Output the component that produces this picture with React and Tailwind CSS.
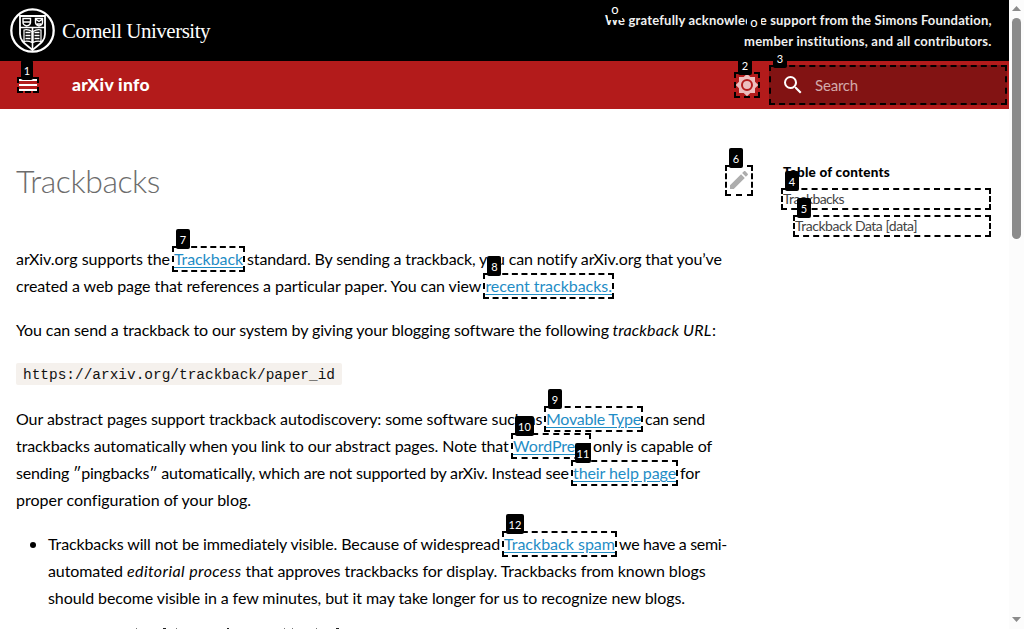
import React, { useLayoutEffect, useRef, useState } from "react";

// Text run whose tracking is computed so that it fills `w` pixels.
function T({ w, children, className = "" }) {
  const ref = useRef(null);
  const [ls, setLs] = useState(0);
  useLayoutEffect(() => {
    const el = ref.current;
    const range = document.createRange();
    range.selectNodeContents(el);
    const natural = range.getBoundingClientRect().width;
    setLs((prev) => prev + (w - natural) / String(children).length);
  }, [w, children]);
  return (
    <span className={`block whitespace-pre ${className}`} style={{ width: w }}>
      <span ref={ref} style={{ letterSpacing: ls }}>{children}</span>
    </span>
  );
}

function Hint({ n, box = "inset-0", text = "pt-[1px]", wide = "w-[14px]" }) {
  return (
    <span className={`absolute z-10 border-2 border-dashed border-black ${box}`}>
      <span className={`absolute left-[2px] top-[-19px] flex h-5 items-center justify-center rounded-[2px] bg-black text-[11px] leading-none font-normal text-white ${wide} ${text}`}>{n}</span>
    </span>
  );
}

// Segments are [text, start x, end x, style, hint number, hint width].
function Line({ start, segs }) {
  let x = start;
  return (
    <div className="flex h-[27.2px] items-start">
      {segs.map(([t, a, b, kind, n, wide], i) => {
        const ml = a - x;
        x = b;
        return (
          <span key={i} className="relative block h-[27.2px] shrink-0 leading-[26px]" style={{ marginLeft: ml }}>
            <T w={b - a} className={kind === "a" ? "text-[#1f8dc6] underline underline-offset-2" : kind === "i" ? "italic" : ""}>{t}</T>
            {n && <Hint n={n} wide={wide} box="-left-[2px] -right-[2px] top-0 h-[26px]" />}
          </span>
        );
      })}
    </div>
  );
}

function Shield() {
  return (
    <svg className="size-[45px] shrink-0" viewBox="0 0 45 45" fill="none" stroke="#fff">
      <circle cx="22.5" cy="22.5" r="21.2" strokeWidth="2.3" />
      <path d="M10 8h25v18c0 8-7 11-12.5 16C17 37 10 34 10 26Z" strokeWidth="1.8" />
      <path d="M10 19.5h25M22.5 19.5V41" strokeWidth="1.6" />
      <path d="M13 10.5h7.500v4c0 2.500-2 3-3.700 3.500-2-.5-3.800-1-3.800-3.500ZM25.500 10.500h7v4c0 2.500-2 3-3.500 3.500-1.500-.5-3.500-1-3.500-3.500ZM13 14h7M26 11.500l3 2 3-2M27 16h4" strokeWidth="1.4" />
      <path d="M14 22q4-1 8 1.500v11q-4-2-8-1ZM31 22q-4-1-8 1.500v11q4-2 8-1Z" strokeWidth="1.2" />
      <path d="M15.500 24.500h5M15.500 27.500h5M15.500 30.500h5M24.500 24.500h5M24.500 27.500h5M24.500 30.500h5" strokeWidth="1.5" />
    </svg>
  );
}

export default function App() {
  return (
    <div className="flex h-[629px] w-[1024px] overflow-hidden bg-white font-['Lato',sans-serif] text-black">
      <div className="flex h-full w-[1009px] flex-col">
        <header className="flex h-[61px] shrink-0 items-center justify-between bg-black pr-[17px] pl-[10px] text-white">
          <div className="flex items-center gap-[7px]">
            <Shield />
            <T w={148} className="pt-[2px] font-['Liberation_Serif',serif] text-[21px] leading-none">Cornell University</T>
          </div>
          <div className="relative flex flex-col items-end text-[13px] leading-[21px] font-bold text-[#f0f0f0]">
            <T w={387}>We gratefully acknowledge support from the Simons Foundation,</T>
            <T w={248}>member institutions, and all contributors.</T>
            <span className="absolute top-[-10px] left-[3px] flex h-5 w-[14px] items-center justify-center bg-black text-[13px] leading-none font-normal text-white">o</span>
            <span className="absolute top-[2px] left-[142px] flex h-5 w-[14px] items-center justify-center bg-black pt-[2px] text-[13px] leading-none font-normal text-white">o</span>
          </div>
        </header>
        <nav className="flex h-12 shrink-0 items-center bg-[#b31b1b] pl-[17px] text-white">
          <div className="relative flex h-4 w-[22px] items-center justify-center">
            <svg className="h-3 w-[18px]" viewBox="0 0 18 12"><path d="M0 0h18v2H0zM0 5h18v2H0zM0 10h18v2H0z" fill="#fff" /></svg>
            <Hint n="1" wide="w-[12px]" />
          </div>
          <T w={78} className="ml-[33px] text-[17.5px] leading-none font-black">arXiv info</T>
          <div className="relative ml-[584px] flex size-[26px] items-center justify-center">
            <svg className="size-6" viewBox="0 0 24 24">
              <path d="M20 8.690V4h-4.690L12 .69 8.690 4H4v4.690L.69 12 4 15.310V20h4.690L12 23.310 15.310 20H20v-4.690L23.310 12z" fill="#ecbfbf" />
              <circle cx="12" cy="12" r="5" fill="none" stroke="#b31b1b" strokeWidth="2" />
            </svg>
            <Hint n="2" />
          </div>
          <div className="relative ml-[9px] flex h-10 w-[238px] items-center bg-[#821313] pl-[12px]">
            <svg className="size-6" viewBox="0 0 24 24" fill="#fff"><path d="M9.500 3A6.500 6.500 0 0 1 16 9.500c0 1.610-.59 3.090-1.560 4.230l.27.270h.790l5 5-1.500 1.500-5-5v-.79l-.27-.27A6.520 6.520 0 0 1 9.500 16 6.500 6.500 0 0 1 3 9.500 6.500 6.500 0 0 1 9.500 3m0 2C7 5 5 7 5 9.500S7 14 9.500 14 14 12 14 9.500 12 5 9.500 5" /></svg>
            <T w={43} className="ml-[10px] text-[15px] leading-none text-[#d3aaaa]">Search</T>
            <Hint n="3" />
          </div>
        </nav>
        <div className="flex min-h-0 flex-1 items-start">
          <main className="flex w-[765px] flex-col pl-4 text-[16px] leading-[27.2px]">
            <div className="mt-[54px] flex h-[34px] items-center">
              <T w={144} className="pt-[2px] text-[32px] leading-none font-light text-[#6c6c6c]">Trackbacks</T>
              <div className="relative ml-[565px] flex h-[31px] w-[28px] shrink-0 items-center justify-center">
                <svg className="size-6" viewBox="0 0 24 24" fill="#adadad"><path d="M20.710 7.040c.39-.39.39-1.040 0-1.410l-2.340-2.340c-.37-.39-1.020-.39-1.410 0l-1.840 1.830 3.750 3.750M3 17.250V21h3.750L17.810 9.930l-3.750-3.750z" /></svg>
                <Hint n="6" />
              </div>
            </div>
            <div className="mt-[49px]">
              <Line start={16} segs={[["arXiv.org supports the", 16, 170], ["Trackback", 174, 243, "a", "7"], ["standard. By sending a trackback, you can notify arXiv.org that you’ve", 247, 722]]} />
              <Line start={16} segs={[["created a web page that references a particular paper. You can view", 16, 481.500], ["recent trackbacks.", 485.400, 612, "a", "8"]]} />
            </div>
            <div className="mt-[16.6px]">
              <Line start={16} segs={[["You can send a trackback to our system by giving your blogging software the following", 16, 608.500], ["trackback URL", 612.500, 711.500, "i"], [":", 712, 716]]} />
            </div>
            <div className="mt-[19px] flex h-[22px] w-[326px] items-center rounded-[2px] bg-[#f5f1ed] pt-[3px] pl-[7px] font-['Liberation_Mono',monospace] text-[14.450px] text-[#111]">
              <T w={312}>https://arxiv.org/trackback/paper_id</T>
            </div>
            <div className="mt-[20.400px]">
              <Line start={16} segs={[["Our abstract pages support trackback autodiscovery: some software such as", 16, 542], ["Movable Type", 546, 641, "a", "9"], ["can send", 645, 705]]} />
              <Line start={16} segs={[["trackbacks automatically when you link to our abstract pages. Note that", 16, 509], ["WordPress", 513, 589, "a", "10", "w-[19px]"], ["only is capable of", 593, 712]]} />
              <Line start={16} segs={[["sending ″pingbacks″ automatically, which are not supported by arXiv. Instead see", 16, 569], ["their help page", 573, 676, "a", "11", "w-[16px]"], ["for", 680, 700]]} />
              <Line start={16} segs={[["proper configuration of your blog.", 16, 251]]} />
            </div>
            <div className="mt-[16.4px] flex">
              <span className="mt-[11px] ml-[14px] block size-[6px] rounded-full bg-black" />
              <div className="ml-[12px]">
                <Line start={48} segs={[["Trackbacks will not be immediately visible. Because of widespread", 48, 500], ["Trackback spam", 504, 615, "a", "12", "w-[18px]"], ["we have a semi-", 619, 727]]} />
                <Line start={48} segs={[["automated", 48, 123], ["editorial process", 127, 241.500, "i"], ["that approves trackbacks for display. Trackbacks from known blogs", 245.500, 705.500]]} />
                <Line start={48} segs={[["should become visible in a few minutes, but it may take longer for us to recognize new blogs.", 48, 685]]} />
              </div>
            </div>
            <svg className="mt-[15.600px] ml-[88px] h-px w-[260px] shrink-0" viewBox="0 0 260 1"><path d="M59 0h3v1h-3zM123 0h2v1h-2zM232 0h3v1h-3z" fill="#222" /><path d="M32 0h1v1h-1zM72 0h1v1h-1zM180 0h1v1h-1zM188 0h1v1h-1zM212 0h1v1h-1z" fill="#777" /></svg>
          </main>
          <aside className="mt-[53px] ml-[16px] flex w-[210px] flex-col text-[14px] leading-5 text-[#444]">
            <T w={107} className="ml-[2px] text-[13.500px] font-black text-black">Table of contents</T>
            <div className="relative mt-[6px] flex h-[22px] items-center pl-[2px]">
              <T w={61}>Trackbacks</T>
              <Hint n="4" />
            </div>
            <div className="relative mt-[5px] ml-3 flex h-[22px] items-center pl-[2px]">
              <T w={122}>Trackback Data [data]</T>
              <Hint n="5" />
            </div>
          </aside>
        </div>
      </div>
      <div className="flex w-[15px] flex-col items-center bg-[#fcfcfc]">
        <svg className="mt-[6px] h-[5px] w-[9px]" viewBox="0 0 9 5"><path d="M0 5 4.500 0 9 5Z" fill="#8b8b8b" /></svg>
        <span className="mt-[7px] h-[221px] w-[9px] rounded-full bg-[#8b8b8b]" />
        <svg className="mt-auto mb-[7px] h-[5px] w-[9px]" viewBox="0 0 9 5"><path d="M0 0 4.500 5 9 0Z" fill="#8b8b8b" /></svg>
      </div>
    </div>
  );
}
